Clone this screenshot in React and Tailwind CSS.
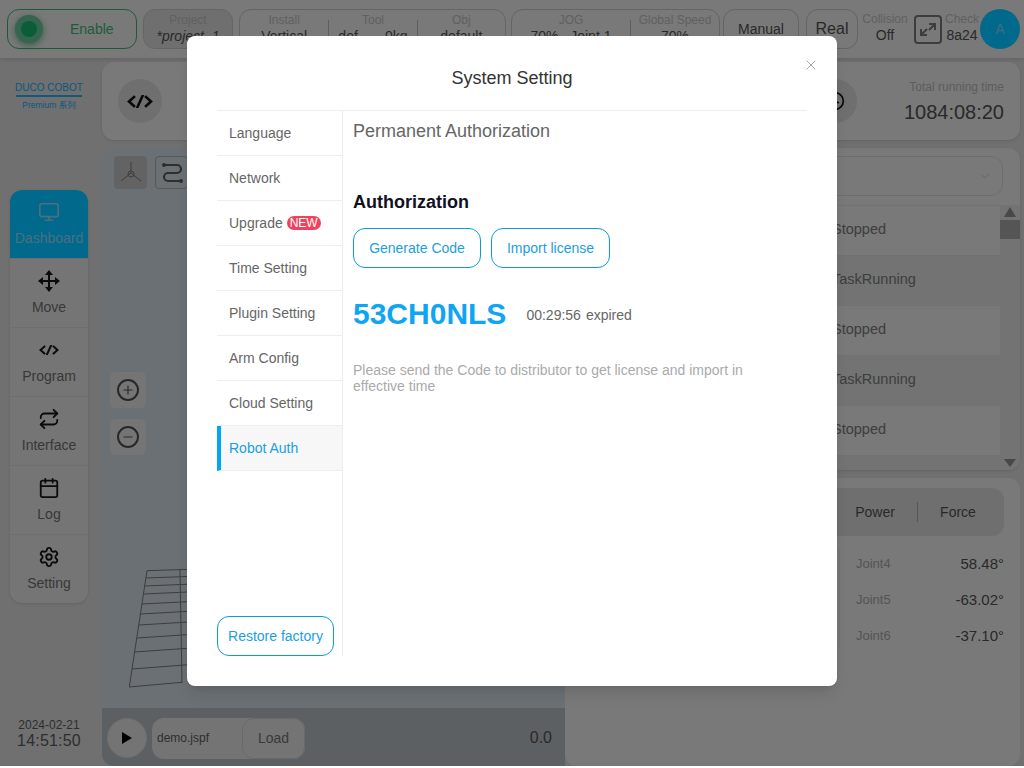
import { Monitor, Repeat, Calendar, Settings, Plus, Minus, X, ChevronDown, Clock } from "lucide-react";

const font = "font-['Liberation_Sans','Noto_Sans_CJK_SC',sans-serif]";

function CodeIcon({ width = 20, height = 10 }) {
  return (
    <svg width={width} height={height} viewBox="0 0 26 13" fill="none" stroke="currentColor" strokeWidth="2.6" strokeLinecap="square">
      <path d="M7 2 2 6.5 7 11M19 2l5 4.500-5 4.500M15.500 1l-5 11" />
    </svg>
  );
}

function MoveIcon() {
  return (
    <svg width="22" height="22" viewBox="0 0 22 22" fill="currentColor" stroke="none">
      <path d="M10 5h2v12h-2zM5 10h12v2H5z" />
      <path d="M11 0l4 5H7zM11 22l-4-5h8zM0 11l5-4v8zM22 11l-5 4V7z" />
    </svg>
  );
}

function Stat({ label, value, className = "" }) {
  return (
    <div className={`flex flex-col items-center ${className}`}>
      <span className="text-[12px] leading-[16px] text-[#b0b0b0] whitespace-nowrap">{label}</span>
      <span className="text-[14px] leading-[16px] text-[#4c4c4c] whitespace-pre">{value}</span>
    </div>
  );
}

function Header() {
  return (
    <div className="flex items-center h-[58px] pl-[7px] bg-[#dcdcdc] shadow-[0_1px_4px_rgba(0,0,0,0.15)] shrink-0">
      <div className="flex items-center w-[130px] h-[40px] rounded-xl border border-[#2ea868] bg-[#dcdcdc]">
        <div className="ml-[7px] w-[28px] h-[28px] rounded-full bg-[#62b690] shadow-[0_2px_6px_rgba(30,150,90,0.7)] flex items-center justify-center">
          <div className="w-[16px] h-[16px] rounded-full bg-[#15a866]" />
        </div>
        <span className="ml-[27px] text-[14px] text-[#36aa6e]">Enable</span>
      </div>
      <div className="ml-[6px] w-[90px] h-[40px] rounded-xl border border-[#b8b8b8] bg-[#cacaca] flex justify-center pt-[2px]">
        <Stat label="Project" value="*project_1" className="[&>span:last-child]:italic" />
      </div>
      <div className="ml-[6px] w-[267px] h-[40px] rounded-xl border border-[#b8b8b8] flex items-start pt-[2px]">
        <Stat label="Install" value="Vertical" className="w-[89px]" />
        <div className="mt-[8px] w-px h-[22px] bg-[#acacac]" />
        <Stat label="Tool" value="def       0kg" className="w-[88px]" />
        <div className="mt-[8px] w-px h-[22px] bg-[#acacac]" />
        <Stat label="Obj" value="default" className="w-[88px]" />
      </div>
      <div className="ml-[5px] w-[209px] h-[40px] rounded-xl border border-[#b8b8b8] flex items-start pt-[2px]">
        <Stat label="JOG" value="70%   Joint 1" className="w-[118px]" />
        <div className="mt-[8px] w-px h-[22px] bg-[#acacac]" />
        <Stat label="Global Speed" value="70%" className="w-[88px]" />
      </div>
      <div className="ml-[3px] w-[76px] h-[40px] rounded-xl border border-[#b8b8b8] flex items-center justify-center text-[14px] text-[#4c4c4c]">
        Manual
      </div>
      <div className="ml-[7px] w-[52px] h-[40px] pb-[1px] rounded-xl border border-[#b8b8b8] flex items-center justify-center text-[16px] text-[#4c4c4c]">
        Real
      </div>
      <div className="w-[54px] flex justify-center mb-[4px]">
        <Stat label="Collision" value="Off" />
      </div>
      <svg className="ml-[2px]" width="28" height="29" viewBox="0 0 28 29" fill="none" stroke="#707070" strokeWidth="2">
        <rect x="1" y="1" width="26" height="27" rx="3" />
        <path d="M15 9h6v6M21 9l-6 6M13 20H7v-6M7 20l6-6" />
      </svg>
      <div className="ml-[2px] w-[36px] mb-[4px]">
        <Stat label="Check" value="8a24" />
      </div>
      <div className="w-[40px] h-[40px] rounded-full bg-[#00c0ff] flex items-center justify-center text-[14px] text-[#7cc2ec]">
        A
      </div>
    </div>
  );
}

const navItems = [
  { label: "Dashboard", Icon: Monitor },
  { label: "Move", Icon: MoveIcon },
  { label: "Program", code: true },
  { label: "Interface", Icon: Repeat },
  { label: "Log", Icon: Calendar },
  { label: "Setting", Icon: Settings },
];

function LeftColumn() {
  return (
    <div className="flex flex-col w-[102px] shrink-0">
      <div className="mt-[24px] pr-[4px] h-[29px] flex flex-col items-center text-[#10a0e8]">
        <span className="text-[10px] leading-[11px] whitespace-nowrap">DUCO COBOT</span>
        <div className="w-[66px] h-[2px] mt-[2px] bg-[#20a4e4]" />
        <span className="mt-[3px] text-[8.5px] leading-[10px] whitespace-nowrap">Premium 系列</span>
      </div>
      <div className="mt-[79px] mx-[10px] w-[78px] rounded-xl bg-[#d6d6d6] shadow-sm overflow-hidden">
        {navItems.map(({ label, Icon, code }, i) => (
          <div
            key={label}
            className={
              i === 0
                ? "h-[68px] bg-[#00c0ff] text-[#8cc8e8] flex flex-col items-center pt-[11px]"
                : "h-[69px] border-t border-[#c8c8c8] text-[#151515] flex flex-col items-center pt-[11px]"
            }
          >
            <div className="h-[22px] flex items-center">
              {code ? <CodeIcon /> : <Icon size={22} strokeWidth={i === 0 ? 1.8 : 2} />}
            </div>
            <span className={i === 0 ? "mt-[7px] text-[14px] leading-[16px]" : "mt-[7px] text-[14px] leading-[16px] text-[#666]"}>{label}</span>
          </div>
        ))}
      </div>
      <div className="mt-[115px] pr-[4px] flex flex-col items-center text-[#555]">
        <span className="text-[12px] leading-[14px]">2024-02-21</span>
        <span className="text-[16px] leading-[17px] tracking-[0.2px]">14:51:50</span>
      </div>
    </div>
  );
}

// row heights on the left edge of the floor grid
const gridRows = [570.7, 578, 586, 594, 604, 614, 625, 638, 652, 669, 687];

function Grid() {
  return (
    <svg className="absolute left-[27px] top-[421px]" width="60" height="122" viewBox="129 569 60 122" fill="none" stroke="#707070" strokeWidth="1">
      <path d="M147 570.700 129.300 687" />
      {gridRows.map((y) => {
        const x = 147 - (18 * (y - 570.7)) / 116.3;
        const rise = 1.3 + (3.4 * (y - 570.7)) / 116.3;
        return <path key={y} d={`M${x} ${y}L${y > 680 ? 182 : 187} ${y - rise}`} />;
      })}
      <path d="M180 570l2 113" />
    </svg>
  );
}

function RoundButton({ Icon }) {
  return (
    <div className="w-[36px] h-[36px] rounded-md bg-[#d6d6d6] flex items-center justify-center text-[#4a4a4a]">
      <div className="w-[22px] h-[22px] rounded-full border-2 border-[#4a4a4a] flex items-center justify-center">
        <Icon size={14} strokeWidth={2} />
      </div>
    </div>
  );
}

function Canvas() {
  return (
    <div className="relative flex flex-col w-[463px] h-[618px] mt-[8px] rounded-l-xl bg-[#c4ccd6] overflow-hidden">
      <div className="flex gap-[8px] pl-[12px] pt-[8px]">
        <div className="w-[33px] h-[33px] rounded bg-[#b4b4b4] flex items-center justify-center">
          <svg width="26" height="26" viewBox="0 0 26 26" fill="none" stroke="#707070" strokeWidth="1">
            <path d="M13 2v11M13 13 3 21M13 13l10 8" />
            <circle cx="13" cy="14" r="3" />
          </svg>
        </div>
        <div className="w-[33px] h-[33px] rounded border border-[#a0a0a0] flex items-center justify-center">
          <svg width="26" height="26" viewBox="0 0 26 26" fill="none" stroke="#555" strokeWidth="2.2">
            <path d="M5 5h13a4 4 0 0 1 0 8H9a4 4 0 0 0 0 8h13" />
            <circle cx="5" cy="5" r="2" fill="#555" stroke="none" />
            <circle cx="22" cy="21" r="2" fill="#555" stroke="none" />
          </svg>
        </div>
      </div>
      <div className="flex-1 flex flex-col gap-[11px] pl-[8px] pt-[183px]">
        <RoundButton Icon={Plus} />
        <RoundButton Icon={Minus} />
      </div>
      <Grid />
      <div className="h-[58px] flex items-center pl-[5px] pr-[13px] pt-[2px] bg-[#aaafb4]">
        <div className="w-[40px] h-[40px] rounded-full bg-[#d4d4d4] border border-[#c6c6c6] flex items-center justify-center">
          <svg width="12" height="14" viewBox="0 0 12 14" fill="#000">
            <path d="M1 1l10 6-10 6z" />
          </svg>
        </div>
        <div className="ml-[5px] w-[153px] h-[41px] rounded-xl bg-[#d4d4d4] flex items-center justify-between">
          <span className="ml-[5px] text-[12px] text-[#555]">demo.jspf</span>
          <div className="w-[63px] h-[41px] rounded-xl border border-[#c0c0c0] flex items-center justify-center text-[14px] text-[#6a6a6a]">
            Load
          </div>
        </div>
        <span className="ml-auto text-[16px] text-[#4c4c4c]">0.0</span>
      </div>
    </div>
  );
}

const tasks = ["Stopped", "TaskRunning", "Stopped", "TaskRunning", "Stopped"];
const joints = [
  ["Joint4", "58.48°"],
  ["Joint5", "-63.02°"],
  ["Joint6", "-37.10°"],
];

function RightColumn() {
  return (
    <div className="flex flex-col gap-[8px] w-[455px] mt-[8px]">
      <div className="h-[322px] rounded-xl bg-[#dcdcdc] flex flex-col shadow-sm overflow-hidden">
        <div className="h-[57px] shrink-0 pt-[8px] pr-[17px] pl-[10px]">
          <div className="h-[40px] rounded-xl border border-[#c8c8c8] flex items-center justify-end pr-[10px] text-[#a0a0a0]">
            <ChevronDown size={14} strokeWidth={1} />
          </div>
        </div>
        <div className="flex flex-1">
          <div className="flex-1 bg-[#d2d2d2]">
            {tasks.map((t, i) => (
              <div
                key={i}
                className={
                  (i % 2 === 0 ? "bg-[#dcdcdc]" : "bg-[#d2d2d2]") +
                  " h-[50px] border-t border-[#d0d0d0] pb-[2px] flex items-center pl-[267px] text-[14.5px] text-[#707070]"
                }
              >
                {t}
              </div>
            ))}
          </div>
          <div className="w-[20px] flex flex-col items-center bg-[#d2d2d2]">
            <div className="mt-[2px] w-0 h-0 border-x-[6px] border-x-transparent border-b-[10px] border-b-[#848484]" />
            <div className="mt-[3px] w-[20px] h-[19px] bg-[#9c9c9c]" />
            <div className="mt-auto mb-[3px] w-0 h-0 border-x-[6px] border-x-transparent border-t-[8px] border-t-[#848484]" />
          </div>
        </div>
      </div>
      <div className="flex-1 rounded-xl bg-[#dcdcdc] pl-[10px] pt-[10px] pr-[16px]">
        <div className="h-[48px] rounded-xl bg-[#cacaca] flex items-center text-[14px] text-[#4c4c4c]">
          <span className="ml-[280px] w-[40px] text-center">Power</span>
          <div className="ml-[22px] w-px h-[20px] bg-[#9c9c9c]" />
          <span className="ml-[21px] w-[38px] text-center">Force</span>
        </div>
        <div className="mt-[10px] flex">
          <div className="ml-[257px] w-[8px] h-[107px] mt-[-1px] rounded-r-lg border-r border-[#d0d0d0]" />
          <div className="flex-1 pl-[16px]">
            {joints.map(([name, val]) => (
              <div key={name} className="h-[36px] flex items-center justify-between">
                <span className="text-[13px] text-[#9a9a9a]">{name}</span>
                <span className="text-[15px] text-[#4c4c4c]">{val}</span>
              </div>
            ))}
          </div>
        </div>
      </div>
    </div>
  );
}

const settingItems = ["Language", "Network", "Upgrade", "Time Setting", "Plugin Setting", "Arm Config", "Cloud Setting", "Robot Auth"];

function SettingModal() {
  return (
    <div className="absolute left-[187px] top-[36px] w-[650px] h-[650px] rounded-lg bg-white shadow-lg px-[30px] flex flex-col z-20">
      <div className="relative h-[75px] pt-[10px] shrink-0 border-b border-[#eeeeee] flex items-center justify-center text-[18px] text-[#333]">
        System Setting
        <X className="absolute right-[-12px] top-[21px] text-[#777]" size={16} strokeWidth={1} />
      </div>
      <div className="flex h-[545px]">
        <div className="w-[126px] shrink-0 border-r border-[#eeeeee] flex flex-col">
          {settingItems.map((item) => {
            const active = item === "Robot Auth";
            return (
              <div
                key={item}
                className={
                  active
                    ? "h-[45px] shrink-0 flex items-center pl-[8px] border-l-4 border-l-[#00a8f0] border-b border-b-[#eeeeee] bg-[#f7f7f7] text-[14px] text-[#1a9fe0]"
                    : "h-[45px] shrink-0 flex items-center pl-[12px] border-b border-[#eeeeee] text-[14px] text-[#666]"
                }
              >
                {item}
                {item === "Upgrade" && (
                  <span className="ml-[4px] h-[14px] px-[3px] rounded-full bg-[#f0425d] text-white text-[12px] leading-[14px]">NEW</span>
                )}
              </div>
            );
          })}
          <button className="mt-auto w-[117px] h-[40px] rounded-xl border border-[#0a9bd8] text-[14px] text-[#1a9fe0]">
            Restore factory
          </button>
        </div>
        <div className="flex-1 pl-[10px]">
          <div className="mt-[9px] text-[18px] leading-[22px] text-[#666]">Permanent Authorization</div>
          <div className="mt-[49px] text-[18px] leading-[22px] font-bold text-[#111122]">Authorization</div>
          <div className="mt-[15px] flex gap-[10px]">
            <button className="w-[128px] h-[40px] rounded-xl border border-[#0a9bd8] text-[14px] text-[#1a9fe0]">Generate Code</button>
            <button className="w-[119px] h-[40px] rounded-xl border border-[#0a9bd8] text-[14px] text-[#1a9fe0]">Import license</button>
          </div>
          <div className="mt-[29px] flex items-center h-[34px]">
            <span className="text-[30px] leading-[34px] font-bold text-[#0ea5f5]">53CH0NLS</span>
            <span className="ml-[20px] mt-[2px] text-[14px] text-[#666]">00:29:56</span>
            <span className="ml-[5px] mt-[2px] text-[14px] text-[#666]">expired</span>
          </div>
          <p className="mt-[31px] w-[420px] text-[14px] leading-[16px] text-[#aaa]">
            Please send the Code to distributor to get license and import in effective time
          </p>
        </div>
      </div>
    </div>
  );
}

export default function App() {
  return (
    <div className={`${font} relative w-[1024px] h-[768px] overflow-hidden bg-white`}>
      <div className="flex flex-col h-[766px] bg-[#cccccc]">
        <Header />
        <div className="flex flex-1 min-h-0">
          <LeftColumn />
          <div className="flex-1 flex flex-col min-w-0">
            <div className="h-[78px] mt-[4px] mr-[4px] rounded-xl bg-[#dcdcdc] shadow-sm flex items-center justify-between pl-[16px] pr-[16px] shrink-0">
              <div className="w-[44px] h-[44px] rounded-full bg-[#cacaca] flex items-center justify-center text-[#111]">
                <CodeIcon width={26} height={13} />
              </div>
              <div className="flex items-center">
                <div className="w-[44px] h-[44px] rounded-full bg-[#cacaca] flex items-center justify-center mr-[47px] text-[#111]">
                  <Clock size={20} strokeWidth={2} />
                </div>
                <div className="flex flex-col items-end">
                  <span className="text-[12px] leading-[16px] text-[#aaa]">Total running time</span>
                  <span className="mt-[5px] text-[20px] leading-[24px] text-[#4c4c4c]">1084:08:20</span>
                </div>
              </div>
            </div>
            <div className="flex flex-1 min-h-0">
              <Canvas />
              <RightColumn />
            </div>
          </div>
        </div>
      </div>
      <div className="absolute left-0 top-0 w-full h-[766px] bg-black/45 z-10" />
      <SettingModal />
    </div>
  );
}
